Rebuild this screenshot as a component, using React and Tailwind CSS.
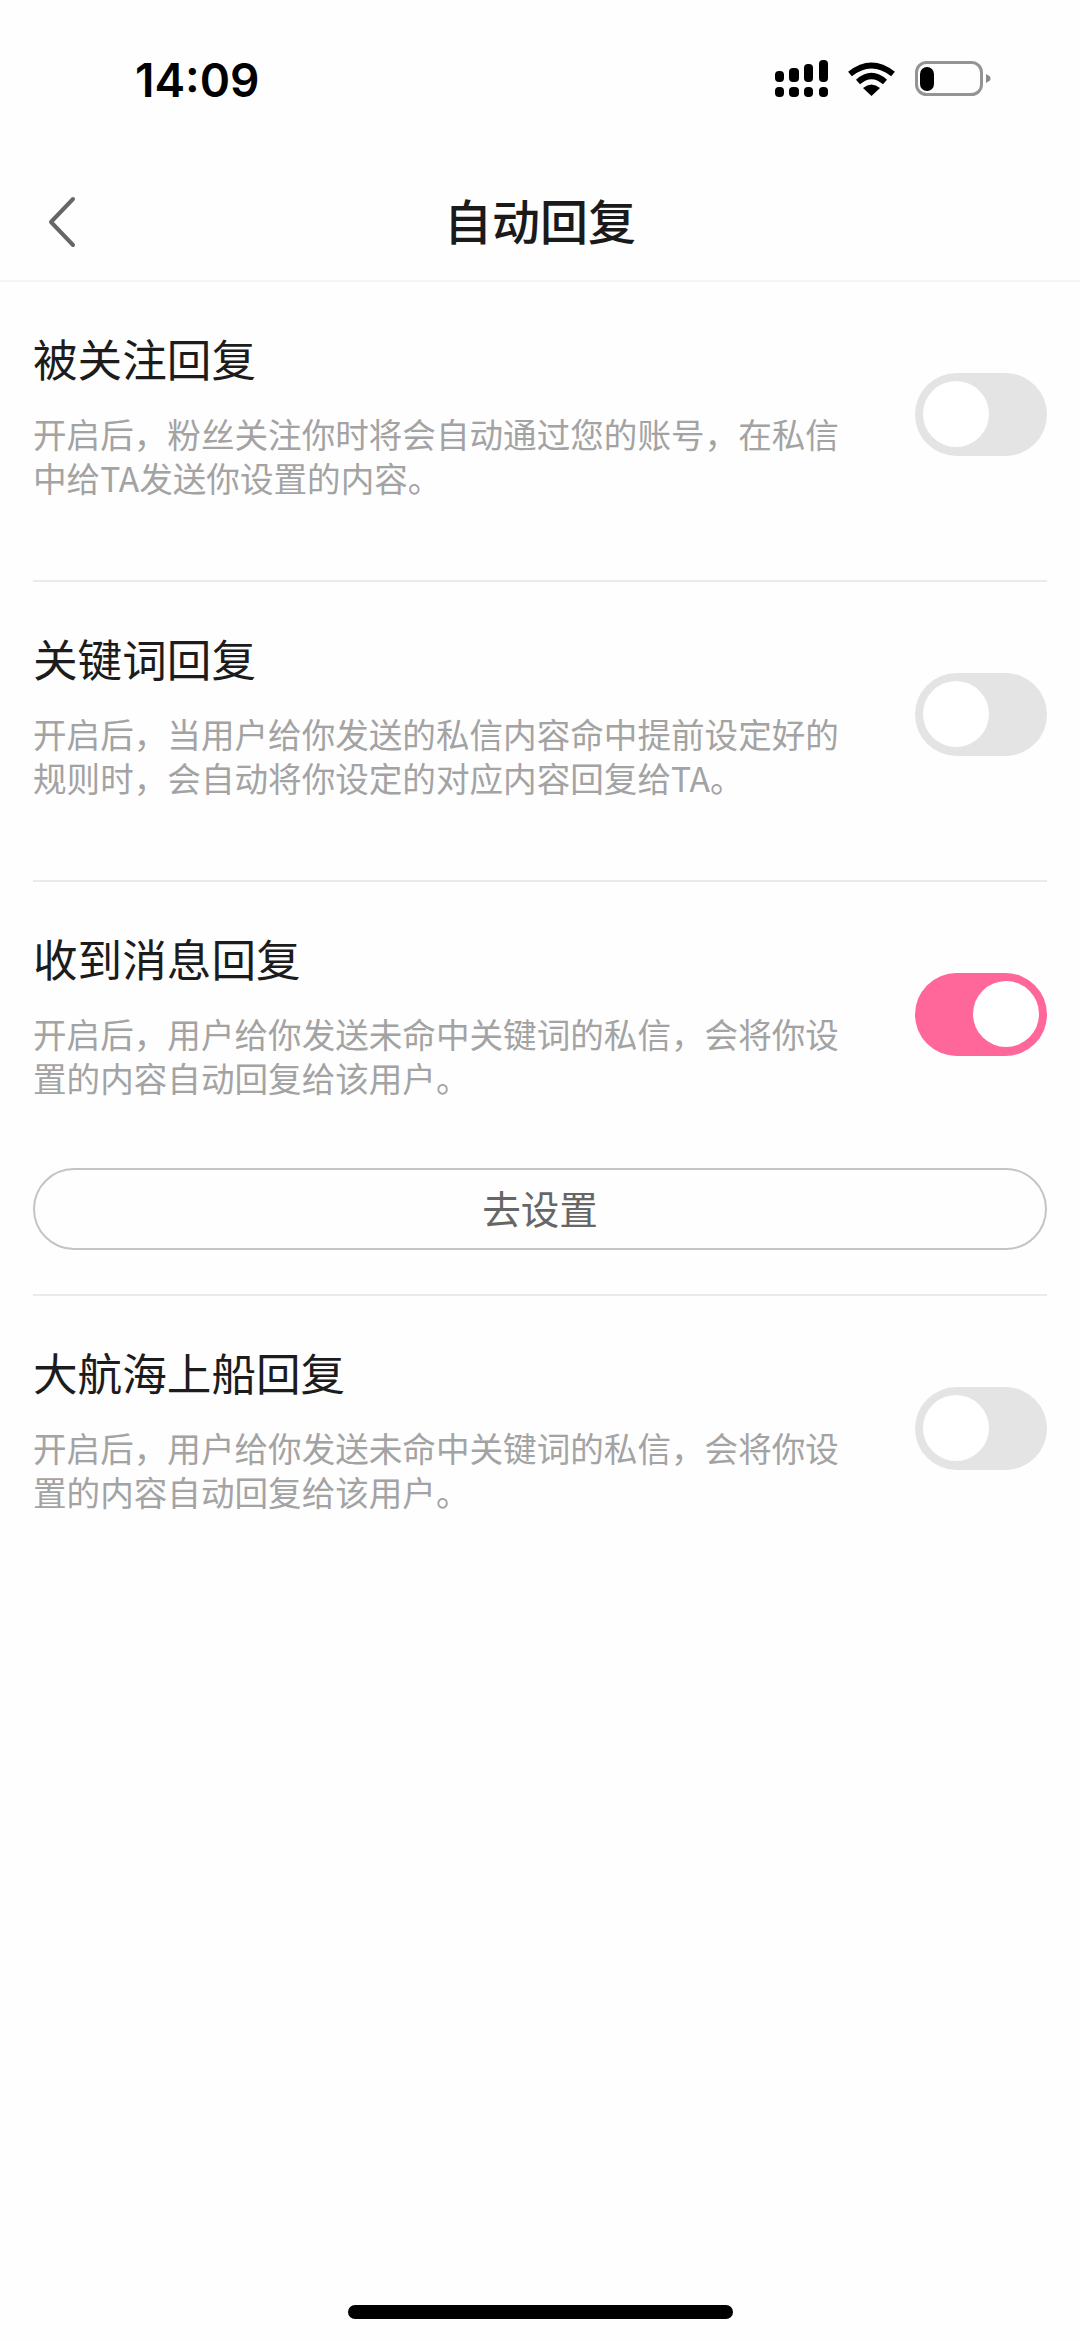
import React from 'react';

const cjk = "font-['Noto_Sans_CJK_SC',sans-serif]";

const Toggle = ({ on }) => (
    <div className={`w-[132px] h-[83px] rounded-full flex items-center shrink-0 px-2 ${on ? 'bg-[#ff6699] justify-end' : 'bg-[#e4e4e5] justify-start'}`}>
        <div className="w-[66px] h-[66px] rounded-full bg-white" />
    </div>
);

const Row = ({ title, desc, on }) => (
    <div className="flex justify-between items-center">
        <div className="w-[812px]">
            <div className="text-[44.6px] leading-[60px] text-[#1c1c1c]">{title}</div>
            <div className="mt-[24px] text-[33.6px] leading-[44px] text-[#a3a3a3]">{desc}</div>
        </div>
        <Toggle on={on} />
    </div>
);

const Divider = () => <div className="h-[2px] bg-[#eaeaea]" />;

const StatusBar = () => (
    <div className="h-[162px] flex items-start justify-between pt-[52px] pl-[135px] pr-[89px]">
        <div className="font-['Inter',sans-serif] font-semibold text-[46px] leading-[56px] text-black">14:09</div>
        <div className="flex items-center gap-[20px] pt-[8px]">
            <svg width="53" height="37" viewBox="0 0 53 37" fill="#000">
                <rect x="0" y="11" width="9" height="11" rx="4" />
                <rect x="14" y="8" width="10" height="14" rx="4" />
                <rect x="29" y="4" width="9" height="18" rx="4" />
                <rect x="44" y="0" width="9" height="22" rx="4" />
                <rect x="0" y="27" width="9" height="10" rx="4" />
                <rect x="14" y="27" width="10" height="10" rx="4" />
                <rect x="29" y="27" width="9" height="10" rx="4" />
                <rect x="44" y="27" width="9" height="10" rx="4" />
            </svg>
            <svg width="47" height="35" viewBox="0 0 47 35" fill="none" stroke="#000" strokeWidth="6">
                <path d="M2 13 Q23.5 -4 45 13" />
                <path d="M10 21 Q23.5 9 37 21" />
                <path d="M15 27 L23.5 35 L32 27 Q23.5 20 15 27 Z" fill="#000" stroke="none" />
            </svg>
            <svg width="76" height="35" viewBox="0 0 76 35" fill="none">
                <rect x="1.5" y="1.5" width="65" height="32" rx="10" stroke="#949494" strokeWidth="3" />
                <rect x="5" y="6" width="14" height="24" rx="7" fill="#000" />
                <path d="M71 13 L75 15.5 Q76 17.5 75 19.5 L71 22 Z" fill="#8a8a8a" />
            </svg>
        </div>
    </div>
);

const App = () => (
    <div className={`w-[1080px] h-[2341px] bg-[#fefefe] flex flex-col ${cjk}`}>
        <StatusBar />

        {/* Nav */}
        <div className="relative h-[120px] flex items-center justify-center border-b-2 border-[#f4f4f4] pb-[4px]">
            <svg className="absolute left-[48px] top-[34px]" width="28" height="52" viewBox="0 0 28 52" fill="none" stroke="#666666" strokeWidth="4" strokeLinecap="round" strokeLinejoin="round">
                <path d="M25 3 L3 26 L25 49" />
            </svg>
            <div className="text-[48px] font-medium leading-[60px] text-[#1a1a1a]">自动回复</div>
        </div>

        <div className="px-[33px] flex flex-col flex-1">
            <div className="h-[298px] pt-[46px]">
                <Row title="被关注回复" desc="开启后，粉丝关注你时将会自动通过您的账号，在私信中给TA发送你设置的内容。" />
            </div>
            <Divider />
            <div className="h-[298px] pt-[46px]">
                <Row title="关键词回复" desc="开启后，当用户给你发送的私信内容命中提前设定好的规则时，会自动将你设定的对应内容回复给TA。" />
            </div>
            <Divider />
            <div className="h-[412px] pt-[46px]">
                <Row on title="收到消息回复" desc="开启后，用户给你发送未命中关键词的私信，会将你设置的内容自动回复给该用户。" />
                <div className="mt-[68px] h-[82px] pb-[2px] rounded-full border-2 border-[#c4c4c4] flex items-center justify-center text-[38.6px] text-[#666666]">去设置</div>
            </div>
            <Divider />
            <div className="pt-[46px]">
                <Row title="大航海上船回复" desc="开启后，用户给你发送未命中关键词的私信，会将你设置的内容自动回复给该用户。" />
            </div>
        </div>

        {/* Home indicator */}
        <div className="flex justify-center pb-[22px]">
            <div className="w-[385px] h-[14px] rounded-full bg-black" />
        </div>
    </div>
);

export default App;
